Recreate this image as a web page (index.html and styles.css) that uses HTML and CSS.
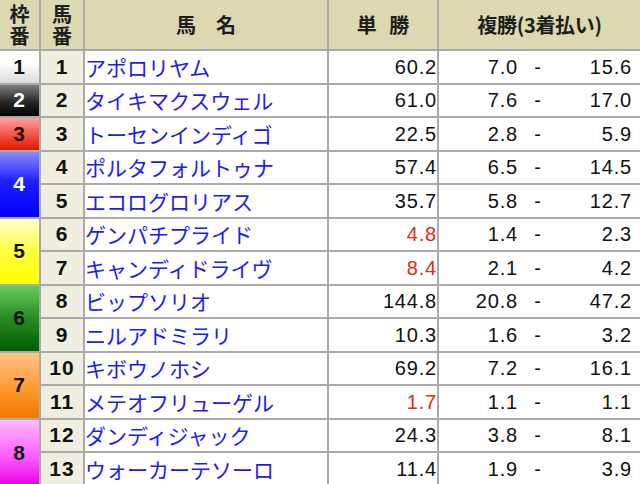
FILE: index.html
```html
<!DOCTYPE html>
<html lang="ja">
<head>
<meta charset="utf-8">
<link rel="stylesheet" href="styles.css">
</head>
<body>
<table class="odds">
  <colgroup>
    <col class="c-waku"><col class="c-num"><col class="c-name"><col class="c-win"><col class="c-place">
  </colgroup>
  <thead>
    <tr class="head">
      <th class="h-stack">枠<br>番</th>
      <th class="h-stack">馬<br>番</th>
      <th>馬　名</th>
      <th class="h-win">単 勝</th>
      <th class="h-place">複勝(3着払い)</th>
    </tr>
  </thead>
  <tbody>
    <tr><td class="waku w1">1</td><td class="num">1</td><td class="name">アポロリヤム</td><td class="win">60.2</td><td class="place"><span class="lo">7.0</span><span class="dash">-</span><span class="hi">15.6</span></td></tr>
    <tr><td class="waku w2">2</td><td class="num">2</td><td class="name">タイキマクスウェル</td><td class="win">61.0</td><td class="place"><span class="lo">7.6</span><span class="dash">-</span><span class="hi">17.0</span></td></tr>
    <tr><td class="waku w3">3</td><td class="num">3</td><td class="name">トーセンインディゴ</td><td class="win">22.5</td><td class="place"><span class="lo">2.8</span><span class="dash">-</span><span class="hi">5.9</span></td></tr>
    <tr><td class="waku w4" rowspan="2">4</td><td class="num">4</td><td class="name">ポルタフォルトゥナ</td><td class="win">57.4</td><td class="place"><span class="lo">6.5</span><span class="dash">-</span><span class="hi">14.5</span></td></tr>
    <tr><td class="num">5</td><td class="name">エコログロリアス</td><td class="win">35.7</td><td class="place"><span class="lo">5.8</span><span class="dash">-</span><span class="hi">12.7</span></td></tr>
    <tr><td class="waku w5" rowspan="2">5</td><td class="num">6</td><td class="name">ゲンパチプライド</td><td class="win hot">4.8</td><td class="place"><span class="lo">1.4</span><span class="dash">-</span><span class="hi">2.3</span></td></tr>
    <tr><td class="num">7</td><td class="name">キャンディドライヴ</td><td class="win hot">8.4</td><td class="place"><span class="lo">2.1</span><span class="dash">-</span><span class="hi">4.2</span></td></tr>
    <tr><td class="waku w6" rowspan="2">6</td><td class="num">8</td><td class="name">ビップソリオ</td><td class="win">144.8</td><td class="place"><span class="lo">20.8</span><span class="dash">-</span><span class="hi">47.2</span></td></tr>
    <tr><td class="num">9</td><td class="name">ニルアドミラリ</td><td class="win">10.3</td><td class="place"><span class="lo">1.6</span><span class="dash">-</span><span class="hi">3.2</span></td></tr>
    <tr><td class="waku w7" rowspan="2">7</td><td class="num">10</td><td class="name">キボウノホシ</td><td class="win">69.2</td><td class="place"><span class="lo">7.2</span><span class="dash">-</span><span class="hi">16.1</span></td></tr>
    <tr><td class="num">11</td><td class="name">メテオフリューゲル</td><td class="win hot">1.7</td><td class="place"><span class="lo">1.1</span><span class="dash">-</span><span class="hi">1.1</span></td></tr>
    <tr><td class="waku w8" rowspan="2">8</td><td class="num">12</td><td class="name">ダンディジャック</td><td class="win">24.3</td><td class="place"><span class="lo">3.8</span><span class="dash">-</span><span class="hi">8.1</span></td></tr>
    <tr><td class="num">13</td><td class="name">ウォーカーテソーロ</td><td class="win">11.4</td><td class="place"><span class="lo">1.9</span><span class="dash">-</span><span class="hi">3.9</span></td></tr>
  </tbody>
</table>
</body>
</html>
```
FILE: styles.css
```css
html, body {
  margin: 0;
  padding: 0;
  background: #fff;
  overflow: hidden;
}

.odds {
  border-collapse: collapse;
  border-style: hidden;
  table-layout: fixed;
  width: 640px;
  font-family: "Noto Sans CJK JP", "Noto Sans", sans-serif;
  color: #111;
}

.c-waku { width: 40px; }
.c-num { width: 44px; }
.c-name { width: 244px; }
.c-win { width: 110px; }
.c-place { width: 202px; }

.odds th,
.odds td {
  border: 2px solid #aaa;
  padding: 0;
  overflow: hidden;
  white-space: nowrap;
}

.head { height: 50px; }
.odds tbody tr { height: 33.5px; }

.odds th {
  background: #dcd8b2;
  font-size: 20px;
  font-weight: bold;
  color: #1e1e1e;
  text-align: center;
  vertical-align: middle;
  line-height: 22px;
}

.h-stack {
  font-size: 19px;
  line-height: 21px;
  padding-top: 1px;
}

.h-win { word-spacing: 8px; }
.h-place { letter-spacing: -0.3px; }

.waku,
.num {
  text-align: center;
  font-family: "Liberation Sans", "Noto Sans", sans-serif;
  font-weight: bold;
  font-size: 21px;
  letter-spacing: 1px;
  line-height: 24px;
}

.num { background: #efeee0; }

.waku { color: #111; }
.w1 { background: linear-gradient(#ffffff 0%, #ffffff 35%, #dcdcdc 100%); }
.w2 { background: linear-gradient(#7e7e7e 0%, #262626 55%, #000 100%); color: #fff; }
.w3 { background: linear-gradient(#ffa0a0 0%, #f04a3a 60%, #e01800 100%); color: #2a0000; }
.w4 { background: linear-gradient(#8c8cff 0%, #2020ff 45%, #0000ff 100%); color: #fff; }
.w5 { background: linear-gradient(#ffffd0 0%, #ffff40 50%, #ffff00 100%); }
.w6 { background: linear-gradient(#66cc5c 0%, #2a8a22 50%, #005e00 100%); }
.w7 { background: linear-gradient(#ffc488 0%, #ff9a30 55%, #f07800 100%); }
.w8 { background: linear-gradient(#ffbcff 0%, #ff5cff 55%, #e600e6 100%); }

.name {
  color: #1c1cf0;
  font-size: 21px;
  padding-left: 5px;
  line-height: 24px;
}

.win,
.place {
  font-family: "Liberation Sans", "Noto Sans", sans-serif;
  font-size: 20px;
  letter-spacing: 0.8px;
  line-height: 24px;
  color: #111;
}

.win {
  text-align: right;
  padding-right: 8px;
}

.hot { color: #dd2a14; }

.place .lo {
  display: inline-block;
  width: 79px;
  text-align: right;
}

.place .dash {
  display: inline-block;
  width: 40px;
  text-align: center;
}

.place .hi {
  display: inline-block;
  width: 74px;
  text-align: right;
}
```
